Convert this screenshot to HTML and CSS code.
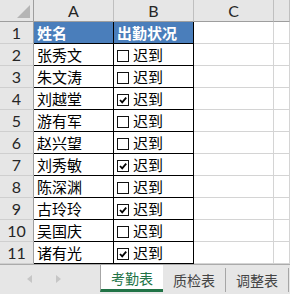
FILE: index.html
```html
<!DOCTYPE html>
<html>
<head>
    <title>考勤表</title>
    <link rel="stylesheet" href="styles.css">
</head>
<body>
    <div class="sheet">
        <div class="cell hd corner"><span class="tri"></span></div>
        <div class="cell hd col">A</div>
        <div class="cell hd col">B</div>
        <div class="cell hd col">C</div>
        <div class="cell hd col last"></div>

        <div class="cell hd row">1</div>
        <div class="cell data title">姓名</div>
        <div class="cell data title">出勤状况</div>
        <div class="cell"></div>
        <div class="cell last"></div>

        <div class="cell hd row">2</div>
        <div class="cell data">张秀文</div>
        <div class="cell data"><span class="box"></span>迟到</div>
        <div class="cell"></div>
        <div class="cell last"></div>

        <div class="cell hd row">3</div>
        <div class="cell data">朱文涛</div>
        <div class="cell data"><span class="box"></span>迟到</div>
        <div class="cell"></div>
        <div class="cell last"></div>

        <div class="cell hd row">4</div>
        <div class="cell data">刘越堂</div>
        <div class="cell data"><span class="box on"><svg viewBox="0 0 10 10"><path d="M2 5 L4.2 7.4 L8.2 2.6"/></svg></span>迟到</div>
        <div class="cell"></div>
        <div class="cell last"></div>

        <div class="cell hd row">5</div>
        <div class="cell data">游有军</div>
        <div class="cell data"><span class="box"></span>迟到</div>
        <div class="cell"></div>
        <div class="cell last"></div>

        <div class="cell hd row">6</div>
        <div class="cell data">赵兴望</div>
        <div class="cell data"><span class="box"></span>迟到</div>
        <div class="cell"></div>
        <div class="cell last"></div>

        <div class="cell hd row">7</div>
        <div class="cell data">刘秀敏</div>
        <div class="cell data"><span class="box on"><svg viewBox="0 0 10 10"><path d="M2 5 L4.2 7.4 L8.2 2.6"/></svg></span>迟到</div>
        <div class="cell"></div>
        <div class="cell last"></div>

        <div class="cell hd row">8</div>
        <div class="cell data">陈深渊</div>
        <div class="cell data"><span class="box"></span>迟到</div>
        <div class="cell"></div>
        <div class="cell last"></div>

        <div class="cell hd row">9</div>
        <div class="cell data">古玲玲</div>
        <div class="cell data"><span class="box on"><svg viewBox="0 0 10 10"><path d="M2 5 L4.2 7.4 L8.2 2.6"/></svg></span>迟到</div>
        <div class="cell"></div>
        <div class="cell last"></div>

        <div class="cell hd row">10</div>
        <div class="cell data">吴国庆</div>
        <div class="cell data"><span class="box"></span>迟到</div>
        <div class="cell"></div>
        <div class="cell last"></div>

        <div class="cell hd row">11</div>
        <div class="cell data">诸有光</div>
        <div class="cell data"><span class="box on"><svg viewBox="0 0 10 10"><path d="M2 5 L4.2 7.4 L8.2 2.6"/></svg></span>迟到</div>
        <div class="cell"></div>
        <div class="cell last"></div>
    </div>

    <div class="tabs">
        <div class="nav">
            <span class="arrow left"></span>
            <span class="arrow right"></span>
        </div>
        <div class="tab active">考勤表</div>
        <div class="tab">质检表</div>
        <div class="tab">调整表</div>
    </div>
</body>
</html>
```

FILE: styles.css
```css
body {
    margin: 0;
    width: 290px;
    height: 294px;
    overflow: hidden;
    background: #fff;
    font-family: "Noto Sans CJK SC", "Microsoft YaHei", sans-serif;
    color: #000;
}
.sheet {
    display: grid;
    grid-template-columns: 34px 80px 80px 80px 16px;
    grid-auto-rows: 22px;
    height: 264px;
}
.cell {
    box-sizing: border-box;
    border-right: 1px solid #d4d4d4;
    border-bottom: 1px solid #d4d4d4;
    display: flex;
    align-items: flex-end;
    font-size: 15px;
    line-height: 20px;
    white-space: nowrap;
    overflow: hidden;
}
.hd {
    background: #e6e6e6;
    color: #262626;
    font-family: Lato, "Liberation Sans", sans-serif;
    font-size: 16px;
    justify-content: center;
    align-items: center;
    border-color: #bfbfbf;
}
.col {
    border-bottom-color: #9e9e9e;
    line-height: 21px;
}
.row {
    border-right-color: #9e9e9e;
    border-bottom-color: #cfcfcf;
}
.corner {
    position: relative;
    border-bottom-color: #9e9e9e;
    border-right-color: #9e9e9e;
}
.tri {
    position: absolute;
    right: 3px;
    bottom: 3px;
    width: 0;
    height: 0;
    border-left: 13px solid transparent;
    border-bottom: 13px solid #b5b5b5;
}
.data {
    border-right-color: #000;
    border-bottom-color: #000;
    padding-left: 3px;
}
.title {
    background: #4a7ebb;
    color: #fff;
    font-weight: bold;
}
.box {
    box-sizing: border-box;
    width: 12px;
    height: 12px;
    border: 1px solid #111;
    margin: 0 4px 3px 0;
    flex: none;
    background: #fff;
}
.box svg {
    display: block;
    width: 10px;
    height: 10px;
}
.box svg path {
    fill: none;
    stroke: #000;
    stroke-width: 1.8;
}
.tabs {
    display: flex;
    height: 30px;
    box-sizing: border-box;
    background: #e6e6e6;
    border-top: 1px solid #ababab;
    font-size: 14px;
    color: #444;
}
.nav {
    width: 100px;
    flex: none;
    position: relative;
}
.arrow {
    position: absolute;
    top: 10px;
    width: 0;
    height: 0;
    border-top: 4px solid transparent;
    border-bottom: 4px solid transparent;
}
.arrow.left {
    left: 27px;
    border-right: 5px solid #c6c6c6;
}
.arrow.right {
    left: 56px;
    border-left: 5px solid #c6c6c6;
}
.tab {
    width: 63px;
    flex: none;
    height: 24px;
    margin-top: 3px;
    display: flex;
    align-items: center;
    justify-content: center;
    border-right: 1px solid #a6a6a6;
    box-sizing: border-box;
}
.tab.active {
    margin-top: 0;
    height: 27px;
    background: #fff;
    color: #217346;
    border-right: none;
    border-left: 1px solid #a6a6a6;
    border-bottom: 3px solid #217346;
    padding-top: 1px;
}
```
